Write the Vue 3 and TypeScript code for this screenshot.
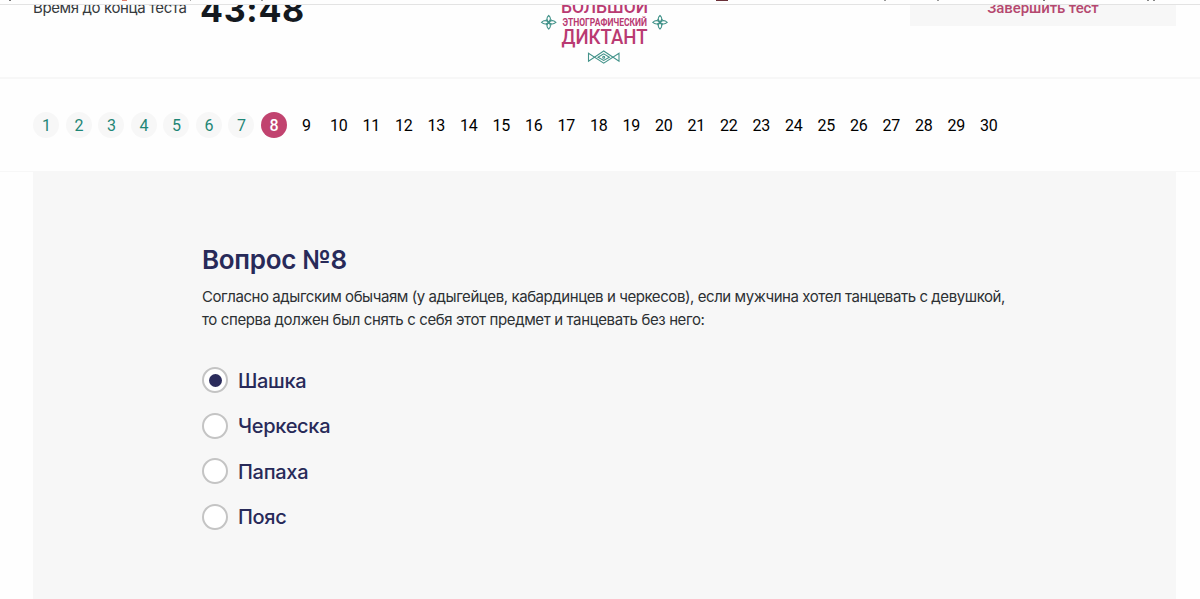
<script setup lang="ts">
import { ref } from 'vue'

const total = 30
const current = 8
const options: string[] = ['Шашка', 'Черкеска', 'Папаха', 'Пояс']
const selected = ref(0)

interface Mark { x: number; w: number; h: number; c: string }
const marks: Mark[] = [
  { x: 9, w: 2, h: 1, c: '#777' },
  { x: 122, w: 5, h: 1, c: '#e08070' },
  { x: 190, w: 1, h: 1, c: '#aaa' },
  { x: 261, w: 2, h: 1, c: '#999' },
  { x: 716, w: 12, h: 1, c: '#6a3038' },
  { x: 884, w: 2, h: 1, c: '#999' },
  { x: 937, w: 2, h: 1, c: '#999' },
  { x: 1043, w: 2, h: 1, c: '#777' },
  { x: 1147, w: 2, h: 1, c: '#888' },
  { x: 1153, w: 2, h: 1, c: '#888' },
]
</script>

<template>
  <div class="page">
    <svg class="strip" width="1200" height="5" viewBox="0 0 1200 5">
      <rect v-for="m in marks" :key="m.x" :x="m.x" y="0" :width="m.w" :height="m.h" :fill="m.c" />
      <rect x="0" y="4" width="1200" height="1" fill="#e3e3e3" />
    </svg>

    <header class="header">
      <div class="timer">
        <span class="timer-label">Время до конца теста</span>
        <span class="timer-value">43:48</span>
      </div>
      <svg class="logo" width="130" height="72" viewBox="538 5 130 72">
        <g class="brand">
          <text x="561" y="13" font-size="18" font-weight="500" textLength="87" lengthAdjust="spacingAndGlyphs">БОЛЬШОЙ</text>
          <text x="562.5" y="25.5" font-size="10.5" font-weight="700" textLength="84.5" lengthAdjust="spacingAndGlyphs">ЭТНОГРАФИЧЕСКИЙ</text>
          <text x="561.5" y="44.3" font-size="20.5" font-weight="500" textLength="86" lengthAdjust="spacingAndGlyphs">ДИКТАНТ</text>
        </g>
        <g fill="none" stroke="#43938a" stroke-width="1.1">
          <g v-for="cx in [548.7, 660]" :key="cx" :transform="`translate(${cx} 22.3)`">
            <path d="M0 0C-2.6-2.8-2-5 0-6.8C2-5 2.6-2.8 0 0C2.6 2.8 2 5 0 6.8C-2 5-2.6 2.8 0 0" />
            <path d="M0 0C-2.8-2.6-5-2-7.2 0C-5 2-2.8 2.6 0 0C2.8-2.6 5-2 7.2 0C5 2 2.8 2.6 0 0" />
            <path d="M-2.8-2.8L2.8 2.8M2.8-2.8L-2.8 2.8" />
          </g>
          <path d="M603.7 51L588.5 61.3V53.2L603.7 63.2L619 53.2V61.3Z" />
          <path d="M598 57.2L603.7 53.8L609.4 57.2L603.7 60.4Z" />
          <circle cx="603.7" cy="57.2" r="1" />
        </g>
      </svg>
      <button class="finish" type="button"><span>Завершить тест</span></button>
    </header>

    <nav class="nav">
      <span
        v-for="n in total"
        :key="n"
        class="num"
        :class="{ done: n < current, active: n === current }"
      >{{ n }}</span>
    </nav>

    <main class="panel">
      <h1 class="title">Вопрос №8</h1>
      <p class="question">
        <span class="line first">Согласно адыгским обычаям (у адыгейцев, кабардинцев и черкесов), если мужчина хотел танцевать с девушкой,</span>
        <span class="line second">то сперва должен был снять с себя этот предмет и танцевать без него:</span>
      </p>
      <ul class="options">
        <li v-for="(o, i) in options" :key="o" class="option" @click="selected = i">
          <span class="radio" :class="{ on: selected === i }"></span>
          <span class="option-text">{{ o }}</span>
        </li>
      </ul>
    </main>
  </div>
</template>

<style>
body { background: #fff; overflow: hidden; }
</style>

<style scoped>
.page {
  width: 1200px;
  height: 599px;
  overflow: hidden;
  display: flex;
  flex-direction: column;
  background: #fefefe;
  font-family: Inter, "Open Sans", sans-serif;
  box-sizing: border-box;
}
.strip { display: block; flex: none; }
.header {
  box-sizing: border-box;
  flex: none;
  height: 74px;
  border-bottom: 2px solid #f7f7f7;
  padding: 0 24px 0 33px;
  display: grid;
  grid-template-columns: 505px 130px 1fr;
  align-items: start;
  overflow: hidden;
}
.timer { display: flex; align-items: flex-start; height: 72px; white-space: nowrap; }
.timer-label {
  width: 167px;
  font-size: 15px;
  line-height: 20px;
  margin-top: -7px;
  color: #35393c;
  letter-spacing: -0.38px;
}
.timer-value {
  font-size: 34px;
  line-height: 40px;
  margin-top: -15px;
  font-weight: 700;
  letter-spacing: 0.7px;
  color: #14191f;
}
.logo { display: block; }
.brand { fill: #b93a72; font-family: Roboto, sans-serif; }
.finish {
  justify-self: end;
  width: 266px;
  height: 50px;
  margin-top: -29px;
  border: 0;
  padding: 13px 0 0;
  background: #f7f7f7;
  color: #b5486f;
  font: 500 15px/20px Roboto, sans-serif;
  letter-spacing: -0.1px;
}
.nav {
  flex: none;
  box-sizing: border-box;
  height: 93px;
  padding: 33px 0 0 33px;
  display: flex;
  gap: 6.5px;
  border-bottom: 1px solid #f7f7f7;
}
.num {
  flex: none;
  box-sizing: border-box;
  width: 26px;
  height: 26px;
  padding-left: 0.6px;
  border-radius: 50%;
  text-align: center;
  font: 400 16px/27px Roboto, sans-serif;
  letter-spacing: -0.3px;
  color: #000;
}
.done { background: #f7f7f7; color: #1f8676; }
.active { background: #c1436f; color: #fff; font-weight: 500; }
.panel {
  flex: 1;
  margin: 0 24px 0 33px;
  padding: 70px 0 0 169px;
  background: #f7f7f7;
}
.title {
  margin: 0;
  font-size: 26px;
  line-height: 36px;
  font-weight: 600;
  letter-spacing: -0.3px;
  color: #282a59;
  white-space: nowrap;
}
.question { margin: 7px 0 0; color: #2c3033; font-size: 15px; line-height: 23px; }
.line { display: block; white-space: nowrap; width: max-content; }
.first { letter-spacing: -0.425px; }
.second { letter-spacing: -0.38px; }
.options { list-style: none; margin: 36px 0 0; padding: 0; display: grid; gap: 19.5px; }
.option { display: flex; align-items: center; height: 26px; gap: 10px; }
.radio {
  box-sizing: border-box;
  width: 26px;
  height: 26px;
  border: 2px solid #c4c4c4;
  border-radius: 50%;
  background: #fff;
  display: grid;
  place-items: center;
}
.radio.on::after { content: ""; width: 13px; height: 13px; border-radius: 50%; background: #2b2c5c; }
.option-text { font-size: 20px; line-height: 26px; font-weight: 500; letter-spacing: -0.3px; padding-top: 1px; color: #282a59; }
</style>
